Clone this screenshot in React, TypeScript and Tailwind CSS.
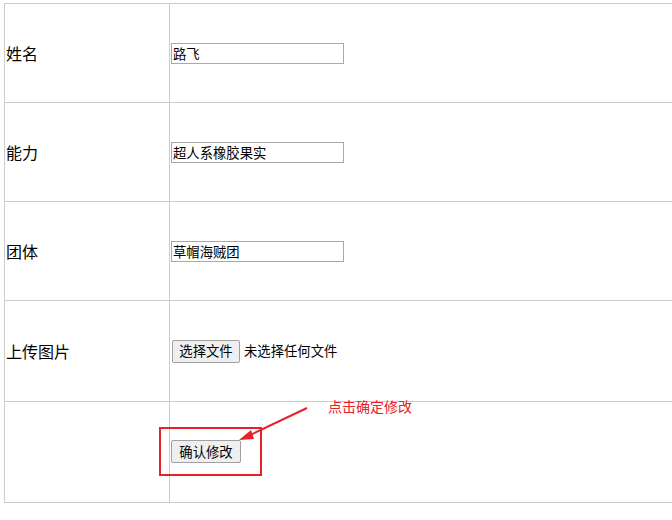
const font = { fontFamily: '"Noto Sans CJK SC", "Noto Sans", sans-serif' }

const Field = ({ value }: { value: string }) => (
  <input
    readOnly
    value={value}
    className="h-[21px] w-[173px] border border-[#a9a9a9] bg-white px-px text-[13.33px] leading-[19px] text-black outline-none"
  />
)

const Row = ({ label, children, tall }: { label: string; children: React.ReactNode; tall?: boolean }) => (
  <div className={`flex border-b border-[#cccccc] ${tall ? 'h-[101px]' : 'h-[99px]'}`}>
    <div className="flex w-[165px] shrink-0 items-center border-r border-[#cccccc] pl-px text-[16px] text-black">
      {label}
    </div>
    <div className="flex flex-1 items-center pl-px">{children}</div>
  </div>
)

export default function App() {
  return (
    <div className="relative h-[520px] w-[672px] overflow-hidden bg-white" style={font}>
      <div className="pl-[4px] pt-[3px]">
        <div className="w-[700px] border-l border-t border-[#cccccc]">
          <Row label="姓名">
            <Field value="路飞" />
          </Row>
          <Row label="能力">
            <Field value="超人系橡胶果实" />
          </Row>
          <Row label="团体">
            <Field value="草帽海贼团" />
          </Row>
          <Row label="上传图片" tall>
            <div className="flex items-center gap-[4px] pl-px">
              <button className="h-[23px] w-[68px] rounded-[2px] border border-[#a0a0a0] bg-[#efefef] text-[13.33px] leading-none text-black">
                选择文件
              </button>
              <span className="text-[13.33px] text-black">未选择任何文件</span>
            </div>
          </Row>
          <Row label="" tall>
            <button className="mb-px h-[23px] w-[70px] rounded-[2px] border border-[#a0a0a0] bg-[#efefef] text-[13.33px] leading-none text-black">
              确认修改
            </button>
          </Row>
        </div>
      </div>

      {/* annotation */}
      <div className="absolute left-[159px] top-[427px] h-[49px] w-[103px] border-2 border-[#e8202a]" />
      <svg className="absolute left-0 top-0" width="672" height="520">
        <line x1="307" y1="408" x2="246" y2="437" stroke="#e8202a" strokeWidth="2" />
        <polygon points="239,440 251,430 254,439" fill="#e8202a" />
      </svg>
      <div className="absolute left-[328px] top-[397px] text-[14px] leading-[18px] text-[#e8202a]">点击确定修改</div>
    </div>
  )
}
